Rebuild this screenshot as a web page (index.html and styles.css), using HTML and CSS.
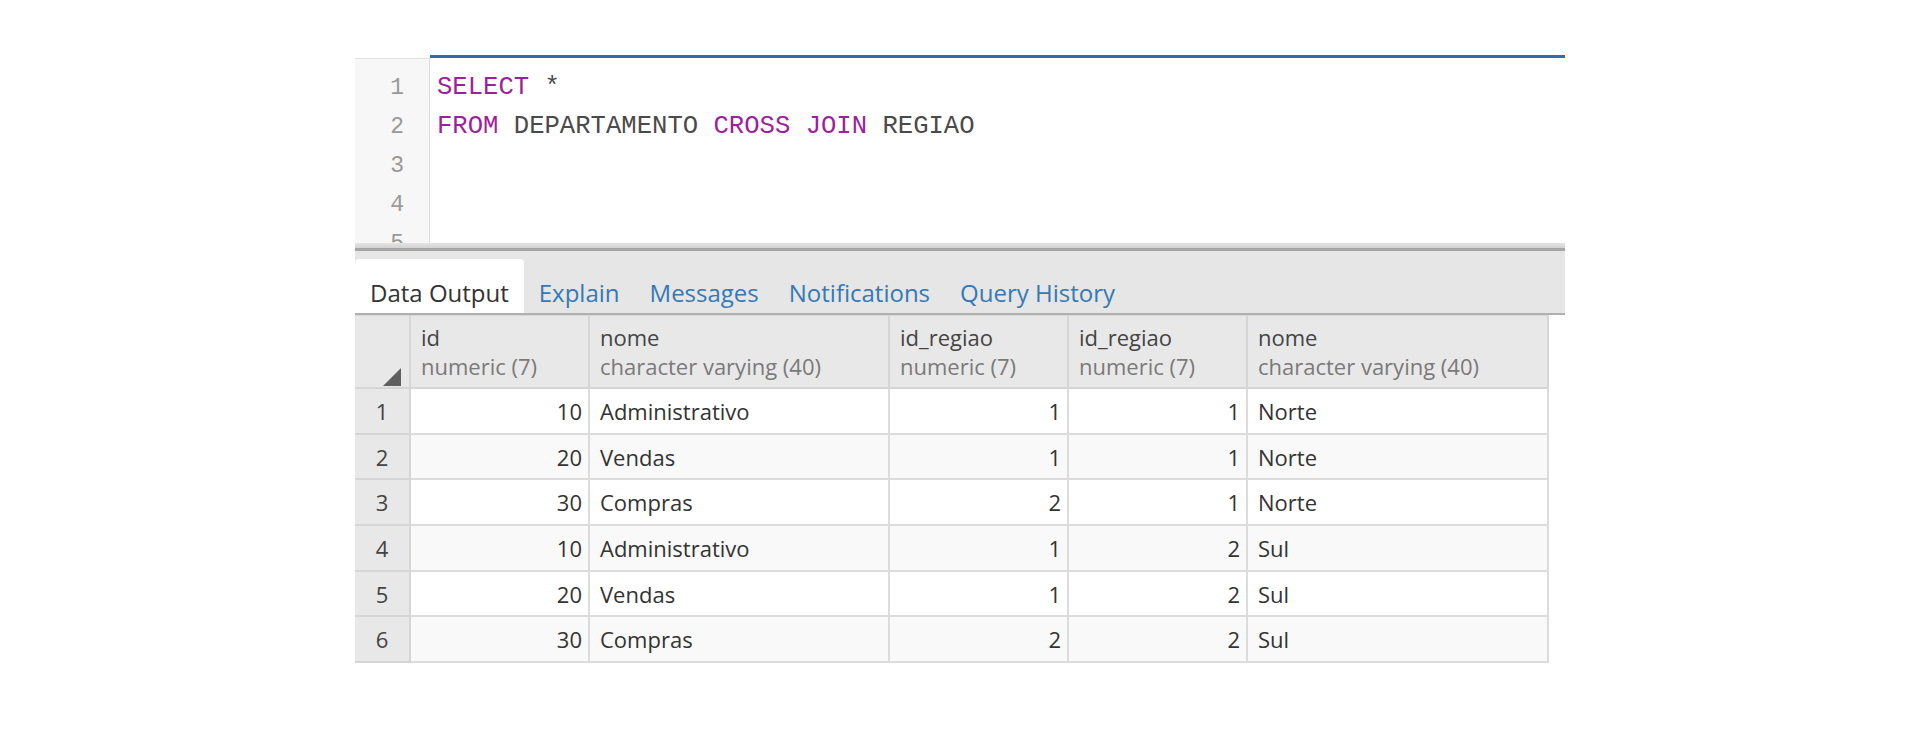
FILE: index.html
```html
<!DOCTYPE html>
<html lang="pt">
<head>
<meta charset="utf-8">
<title>Query Tool</title>
<link rel="stylesheet" href="styles.css">
</head>
<body>
<div class="panel">
  <div class="editor">
    <div class="gutter">
      <div class="ln">1</div>
      <div class="ln">2</div>
      <div class="ln">3</div>
      <div class="ln">4</div>
      <div class="ln">5</div>
    </div>
    <div class="code">
      <div class="line"><span class="kw">SELECT</span> *</div>
      <div class="line"><span class="kw">FROM</span> DEPARTAMENTO <span class="kw">CROSS</span> <span class="kw">JOIN</span> REGIAO</div>
      <div class="line">&nbsp;</div>
      <div class="line">&nbsp;</div>
      <div class="line">&nbsp;</div>
    </div>
  </div>
  <div class="splitter"></div>
  <div class="tabbar">
    <div class="tab active">Data Output</div>
    <div class="tab">Explain</div>
    <div class="tab">Messages</div>
    <div class="tab">Notifications</div>
    <div class="tab">Query History</div>
  </div>
  <div class="grid">
    <div class="hcell corner"><svg width="18" height="18" viewBox="0 0 18 18"><polygon points="18,0 18,18 0,18" fill="#5f5f5f"/></svg></div>
    <div class="hcell"><div class="cname">id</div><div class="ctype">numeric (7)</div></div>
    <div class="hcell"><div class="cname">nome</div><div class="ctype">character varying (40)</div></div>
    <div class="hcell"><div class="cname">id_regiao</div><div class="ctype">numeric (7)</div></div>
    <div class="hcell"><div class="cname">id_regiao</div><div class="ctype">numeric (7)</div></div>
    <div class="hcell"><div class="cname">nome</div><div class="ctype">character varying (40)</div></div>

    <div class="rn">1</div><div class="c num">10</div><div class="c">Administrativo</div><div class="c num">1</div><div class="c num">1</div><div class="c">Norte</div>
    <div class="rn">2</div><div class="c num alt">20</div><div class="c alt">Vendas</div><div class="c num alt">1</div><div class="c num alt">1</div><div class="c alt">Norte</div>
    <div class="rn">3</div><div class="c num">30</div><div class="c">Compras</div><div class="c num">2</div><div class="c num">1</div><div class="c">Norte</div>
    <div class="rn">4</div><div class="c num alt">10</div><div class="c alt">Administrativo</div><div class="c num alt">1</div><div class="c num alt">2</div><div class="c alt">Sul</div>
    <div class="rn">5</div><div class="c num">20</div><div class="c">Vendas</div><div class="c num">1</div><div class="c num">2</div><div class="c">Sul</div>
    <div class="rn">6</div><div class="c num alt">30</div><div class="c alt">Compras</div><div class="c num alt">2</div><div class="c num alt">2</div><div class="c alt">Sul</div>
  </div>
</div>
</body>
</html>
```
FILE: styles.css
```css
html, body {
  margin: 0;
  padding: 0;
  background: #ffffff;
}

body {
  font-family: "Open Sans", "Liberation Sans", sans-serif;
}

.panel {
  width: 1210px;
  margin: 55px 0 0 355px;
}

/* Editor */
.editor {
  display: flex;
  height: 188px;
  overflow: hidden;
}

.gutter {
  width: 75px;
  margin-top: 3px;
  border-top: 1px solid #e2e2e2;
  border-right: 1px solid #dcdcdc;
  background: #f7f7f7;
  padding-top: 10px;
  box-sizing: border-box;
}

.ln {
  font-family: "Liberation Mono", "DejaVu Sans Mono", monospace;
  font-size: 23px;
  line-height: 39px;
  color: #9a9a9a;
  text-align: right;
  padding-right: 25px;
}

.code {
  flex: 1;
  border-top: 3px solid #2b6fb3;
  padding: 10px 0 0 7px;
  background: #ffffff;
}

.line {
  font-family: "Liberation Mono", "DejaVu Sans Mono", monospace;
  font-size: 25.6px;
  line-height: 39px;
  color: #4a4a4a;
  white-space: pre;
}

.kw {
  color: #9d1f9c;
}

/* Splitter */
.splitter {
  height: 8px;
  background: linear-gradient(#e4e4e4 0, #d2d2d2 5px, #a6a6a6 5px, #a6a6a6 8px);
}

/* Tabs */
.tabbar {
  display: flex;
  align-items: flex-end;
  height: 62px;
  background: #e6e6e6;
  border-bottom: 2px solid #b0b0b0;
}

.tab {
  height: 54px;
  box-sizing: border-box;
  padding: 18px 15px 4px 15px;
  font-size: 24px;
  line-height: 32px;
  color: #337ab7;
  white-space: nowrap;
}

.tab.active {
  background: #ffffff;
  color: #333333;
  border-radius: 4px 4px 0 0;
}

/* Grid */
.grid {
  display: grid;
  grid-template-columns: 56px 179px 300px 179px 179px 301px;
  grid-auto-rows: 45.7px;
  grid-template-rows: 73px;
  width: 1194px;
  border-top: 1px solid #d8d8d8;
  font-size: 22px;
}

.hcell {
  background: #e8e8e8;
  border-right: 2px solid #d6d6d6;
  border-bottom: 2px solid #d6d6d6;
  padding: 6px 10px 0 10px;
  box-sizing: border-box;
}

.hcell.corner {
  display: flex;
  align-items: flex-end;
  justify-content: flex-end;
  padding: 0 8px 1px 0;
}

.hcell.corner svg {
  display: block;
}

.cname {
  font-weight: 500;
  color: #444444;
  line-height: 30px;
}

.ctype {
  color: #7a7a7a;
  line-height: 29px;
}

.rn {
  background: #e8e8e8;
  border-right: 2px solid #d6d6d6;
  border-bottom: 2px solid #d6d6d6;
  color: #444444;
  text-align: center;
  display: flex;
  align-items: center;
  justify-content: center;
  box-sizing: border-box;
}

.c {
  background: #ffffff;
  border-right: 2px solid #dcdcdc;
  border-bottom: 2px solid #dcdcdc;
  color: #333333;
  display: flex;
  align-items: center;
  padding: 0 8px 0 10px;
  box-sizing: border-box;
  white-space: nowrap;
}

.c.alt {
  background: #f9f9f9;
}

.c.num {
  justify-content: flex-end;
  padding: 0 6px 0 8px;
}
```
